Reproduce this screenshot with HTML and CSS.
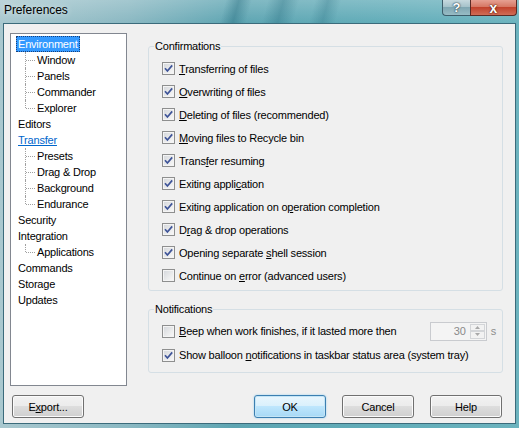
FILE: index.html
```html
<!DOCTYPE html>
<html>
<head>
<meta charset="utf-8">
<title>Preferences</title>
<link rel="stylesheet" href="styles.css">
</head>
<body>
<div class="window">
  <div class="titlebar">
    <span class="title">Preferences</span>
    <div class="caps">
      <span class="cap help">?</span>
      <span class="cap close">x</span>
    </div>
  </div>
  <div class="client">
    <div class="main">
      <ul class="tree">
        <li class="item sel"><span class="lbl">Environment</span></li>
        <li class="item child"><span class="lbl">Window</span></li>
        <li class="item child"><span class="lbl">Panels</span></li>
        <li class="item child"><span class="lbl">Commander</span></li>
        <li class="item child last"><span class="lbl">Explorer</span></li>
        <li class="item"><span class="lbl">Editors</span></li>
        <li class="item link"><span class="lbl">Transfer</span></li>
        <li class="item child"><span class="lbl">Presets</span></li>
        <li class="item child"><span class="lbl">Drag &amp; Drop</span></li>
        <li class="item child"><span class="lbl">Background</span></li>
        <li class="item child last"><span class="lbl">Endurance</span></li>
        <li class="item"><span class="lbl">Security</span></li>
        <li class="item"><span class="lbl">Integration</span></li>
        <li class="item child last"><span class="lbl">Applications</span></li>
        <li class="item"><span class="lbl">Commands</span></li>
        <li class="item"><span class="lbl">Storage</span></li>
        <li class="item"><span class="lbl">Updates</span></li>
      </ul>
      <div class="panels">
        <fieldset class="group confirm">
          <legend>Confirmations</legend>
          <div class="row"><span class="cb"><svg viewBox="0 0 11 11" width="11" height="11"><path d="M2 5.3 L4.4 8 L9.2 2.4" /></svg></span><span><u>T</u>ransferring of files</span></div>
          <div class="row"><span class="cb"><svg viewBox="0 0 11 11" width="11" height="11"><path d="M2 5.3 L4.4 8 L9.2 2.4" /></svg></span><span><u>O</u>verwriting of files</span></div>
          <div class="row"><span class="cb"><svg viewBox="0 0 11 11" width="11" height="11"><path d="M2 5.3 L4.4 8 L9.2 2.4" /></svg></span><span><u>D</u>eleting of files (recommended)</span></div>
          <div class="row"><span class="cb"><svg viewBox="0 0 11 11" width="11" height="11"><path d="M2 5.3 L4.4 8 L9.2 2.4" /></svg></span><span><u>M</u>oving files to Recycle bin</span></div>
          <div class="row"><span class="cb"><svg viewBox="0 0 11 11" width="11" height="11"><path d="M2 5.3 L4.4 8 L9.2 2.4" /></svg></span><span>Trans<u>f</u>er resuming</span></div>
          <div class="row"><span class="cb"><svg viewBox="0 0 11 11" width="11" height="11"><path d="M2 5.3 L4.4 8 L9.2 2.4" /></svg></span><span>Exiting appli<u>c</u>ation</span></div>
          <div class="row"><span class="cb"><svg viewBox="0 0 11 11" width="11" height="11"><path d="M2 5.3 L4.4 8 L9.2 2.4" /></svg></span><span>Exiting application on o<u>p</u>eration completion</span></div>
          <div class="row"><span class="cb"><svg viewBox="0 0 11 11" width="11" height="11"><path d="M2 5.3 L4.4 8 L9.2 2.4" /></svg></span><span>D<u>r</u>ag &amp; drop operations</span></div>
          <div class="row"><span class="cb"><svg viewBox="0 0 11 11" width="11" height="11"><path d="M2 5.3 L4.4 8 L9.2 2.4" /></svg></span><span>Opening separate <u>s</u>hell session</span></div>
          <div class="row"><span class="cb"></span><span>Continue on <u>e</u>rror (advanced users)</span></div>
        </fieldset>
        <fieldset class="group notify">
          <legend>Notifications</legend>
          <div class="row"><span class="cb"></span><span><u>B</u>eep when work finishes, if it lasted more then</span>
            <span class="spin"><span class="val">30</span><span class="arrows"><span class="arr"><svg viewBox="0 0 5 3" width="5" height="3"><path d="M0 3 L2.5 0 L5 3Z"/></svg></span><span class="arr"><svg viewBox="0 0 5 3" width="5" height="3"><path d="M0 0 L2.5 3 L5 0Z"/></svg></span></span></span>
            <span class="unit">s</span>
          </div>
          <div class="row"><span class="cb"><svg viewBox="0 0 11 11" width="11" height="11"><path d="M2 5.3 L4.4 8 L9.2 2.4" /></svg></span><span>Show balloon <u>n</u>otifications in taskbar status area (system tray)</span></div>
        </fieldset>
      </div>
    </div>
    <div class="buttons">
      <span class="btn export">E<u>x</u>port...</span>
      <span class="btn default ok">OK</span>
      <span class="btn">Cancel</span>
      <span class="btn help-btn">Help</span>
    </div>
  </div>
</div>
</body>
</html>
```
FILE: styles.css
```css
* { box-sizing: border-box; }
html, body { margin: 0; padding: 0; }
body {
  width: 519px;
  height: 428px;
  overflow: hidden;
  font-family: "Liberation Sans", Arial, sans-serif;
  font-size: 11px;
  letter-spacing: -0.2px;
  color: #000;
}
.window {
  width: 519px;
  height: 428px;
  display: flex;
  flex-direction: column;
  background: linear-gradient(90deg, #a9c8cf 0%, #8ab8c2 25%, #5ea5b2 45%, #62adb9 75%, #6cb3be 100%);
}
.titlebar {
  height: 23px;
  flex: none;
  display: flex;
  align-items: flex-start;
  background:
    linear-gradient(105deg, transparent 43%, rgba(25,95,115,.35) 45.5%, transparent 48%, transparent 51%, rgba(25,95,115,.3) 54%, transparent 57%, transparent 60%, rgba(25,95,115,.25) 62.5%, transparent 65%),
    linear-gradient(rgba(255,255,255,.22), rgba(255,255,255,0));
}
.title {
  padding: 3px 0 0 4px;
  font-size: 12px;
  line-height: 15px;
  letter-spacing: -0.1px;
  text-shadow: 0 0 6px rgba(255,255,255,.7);
}
.caps {
  margin-left: auto;
  margin-right: 2px;
  display: flex;
  height: 16px;
}
.cap {
  display: flex;
  align-items: center;
  justify-content: center;
  color: #fff;
  font-weight: bold;
  font-size: 13px;
  line-height: 14px;
  letter-spacing: 0;
  text-shadow: 0 0 2px #203a44, 0 0 1px #203a44;
}
.cap.help {
  width: 28px;
  border: 1px solid #3d5d6a;
  border-top: none;
  border-right: none;
  border-radius: 0 0 0 4px;
  background: linear-gradient(#c6d9de 0%, #a2c0c8 50%, #80a7b2 50%, #98bcc5 100%);
}
.cap.close {
  width: 47px;
  border: 1px solid #5a2b25;
  border-top: none;
  border-radius: 0 0 4px 0;
  background: linear-gradient(#e6a092 0%, #d4735f 50%, #c2432d 50%, #d06c56 100%);
  font-size: 14px;
  text-shadow: 0 0 2px #4a1408, 0 0 1px #4a1408;
}
.client {
  flex: none;
  height: 401px;
  margin: 0 3px 4px 3px;
  border: 1px solid #3b6b7b;
  background: #f0f0f0;
  padding: 9px 12px 5px 6px;
  display: flex;
  flex-direction: column;
  gap: 9px;
}
.main {
  display: flex;
  gap: 21px;
  height: 353px;
  flex: none;
}
.tree {
  width: 117px;
  height: 353px;
  flex: none;
  margin: 0;
  padding: 2px 0 0 5px;
  list-style: none;
  background: #fff;
  border: 1px solid #828790;
}
.item {
  height: 16px;
  line-height: 16px;
  white-space: nowrap;
}
.item .lbl {
  display: inline-block;
  height: 16px;
  padding: 0 2px;
}
.item.sel .lbl {
  background: #3399ff;
  color: #fff;
  outline: 1px dotted #18407a;
  outline-offset: -1px;
}
.item.link .lbl {
  color: #0066cc;
  text-decoration: underline;
}
.child {
  position: relative;
  padding-left: 19px;
}
.child::before {
  content: "";
  position: absolute;
  left: 9px;
  top: 0;
  height: 16px;
  border-left: 1px dotted #a0a0a0;
}
.child.last::before { height: 8px; }
.child::after {
  content: "";
  position: absolute;
  left: 10px;
  top: 8px;
  width: 9px;
  border-top: 1px dotted #a0a0a0;
}
.panels {
  flex: 1;
  display: flex;
  flex-direction: column;
}
.group {
  margin: 0;
  min-width: 0;
  border: 1px solid #d5dfe5;
  border-radius: 3px;
}
.group legend {
  margin-left: 5px;
  padding: 0 1px;
  line-height: 14px;
  height: 14px;
}
.confirm { margin-top: 6px; padding: 4px 0 3px 0; }
.notify { margin-top: 11px; padding: 3px 0 5px 0; }
.row {
  display: flex;
  align-items: center;
  gap: 4px;
  height: 23px;
  padding-left: 13px;
  white-space: nowrap;
}
.notify .row { height: 24px; padding-right: 6px; }
.cb {
  width: 13px;
  height: 13px;
  flex: none;
  border: 1px solid #8e8f8f;
  background: linear-gradient(135deg, #d3d6db 0%, #e9eaeb 55%, #fafafa 100%);
  box-shadow: inset 0 0 0 1px #f4f4f4;
  display: flex;
  align-items: center;
  justify-content: center;
}
.cb svg path {
  fill: none;
  stroke: #3e5498;
  stroke-width: 1.7;
}
.spin {
  margin-left: auto;
  width: 57px;
  height: 19px;
  border: 1px solid #c9cbcf;
  background: #f4f4f4;
  display: flex;
  align-items: stretch;
}
.spin .val {
  flex: 1;
  text-align: right;
  padding-right: 4px;
  line-height: 17px;
  color: #8a8a8a;
}
.arrows {
  width: 16px;
  padding: 1px 1px 1px 0;
  display: flex;
  flex-direction: column;
}
.arr {
  flex: 1;
  border: 1px solid #d3d5d8;
  background: #f2f2f2;
  display: flex;
  align-items: center;
  justify-content: center;
}
.arr svg path { fill: #a8a8a8; }
.unit {
  margin-left: 0;
  color: #8d8d8d;
}
.buttons {
  display: flex;
  height: 23px;
  flex: none;
  gap: 16px;
}
.btn {
  width: 72px;
  height: 23px;
  flex: none;
  border: 1px solid #707070;
  border-radius: 3px;
  background: linear-gradient(#f2f2f2 0%, #ebebeb 50%, #dddddd 50%, #cfcfcf 100%);
  box-shadow: inset 0 0 0 1px #fbfbfb;
  display: flex;
  align-items: center;
  justify-content: center;
}
.btn.export { margin-left: 2px; }
.btn.ok { margin-left: auto; }
.btn.help-btn { margin-right: 1px; }
.btn.default {
  border-color: #3c7fb1;
  background: linear-gradient(#eaf6fd 0%, #d9f0fc 50%, #bee6fd 50%, #a7d9f5 100%);
  box-shadow: inset 0 0 0 1px #c4e5f6, 0 0 2px #8fcff0;
}
```
